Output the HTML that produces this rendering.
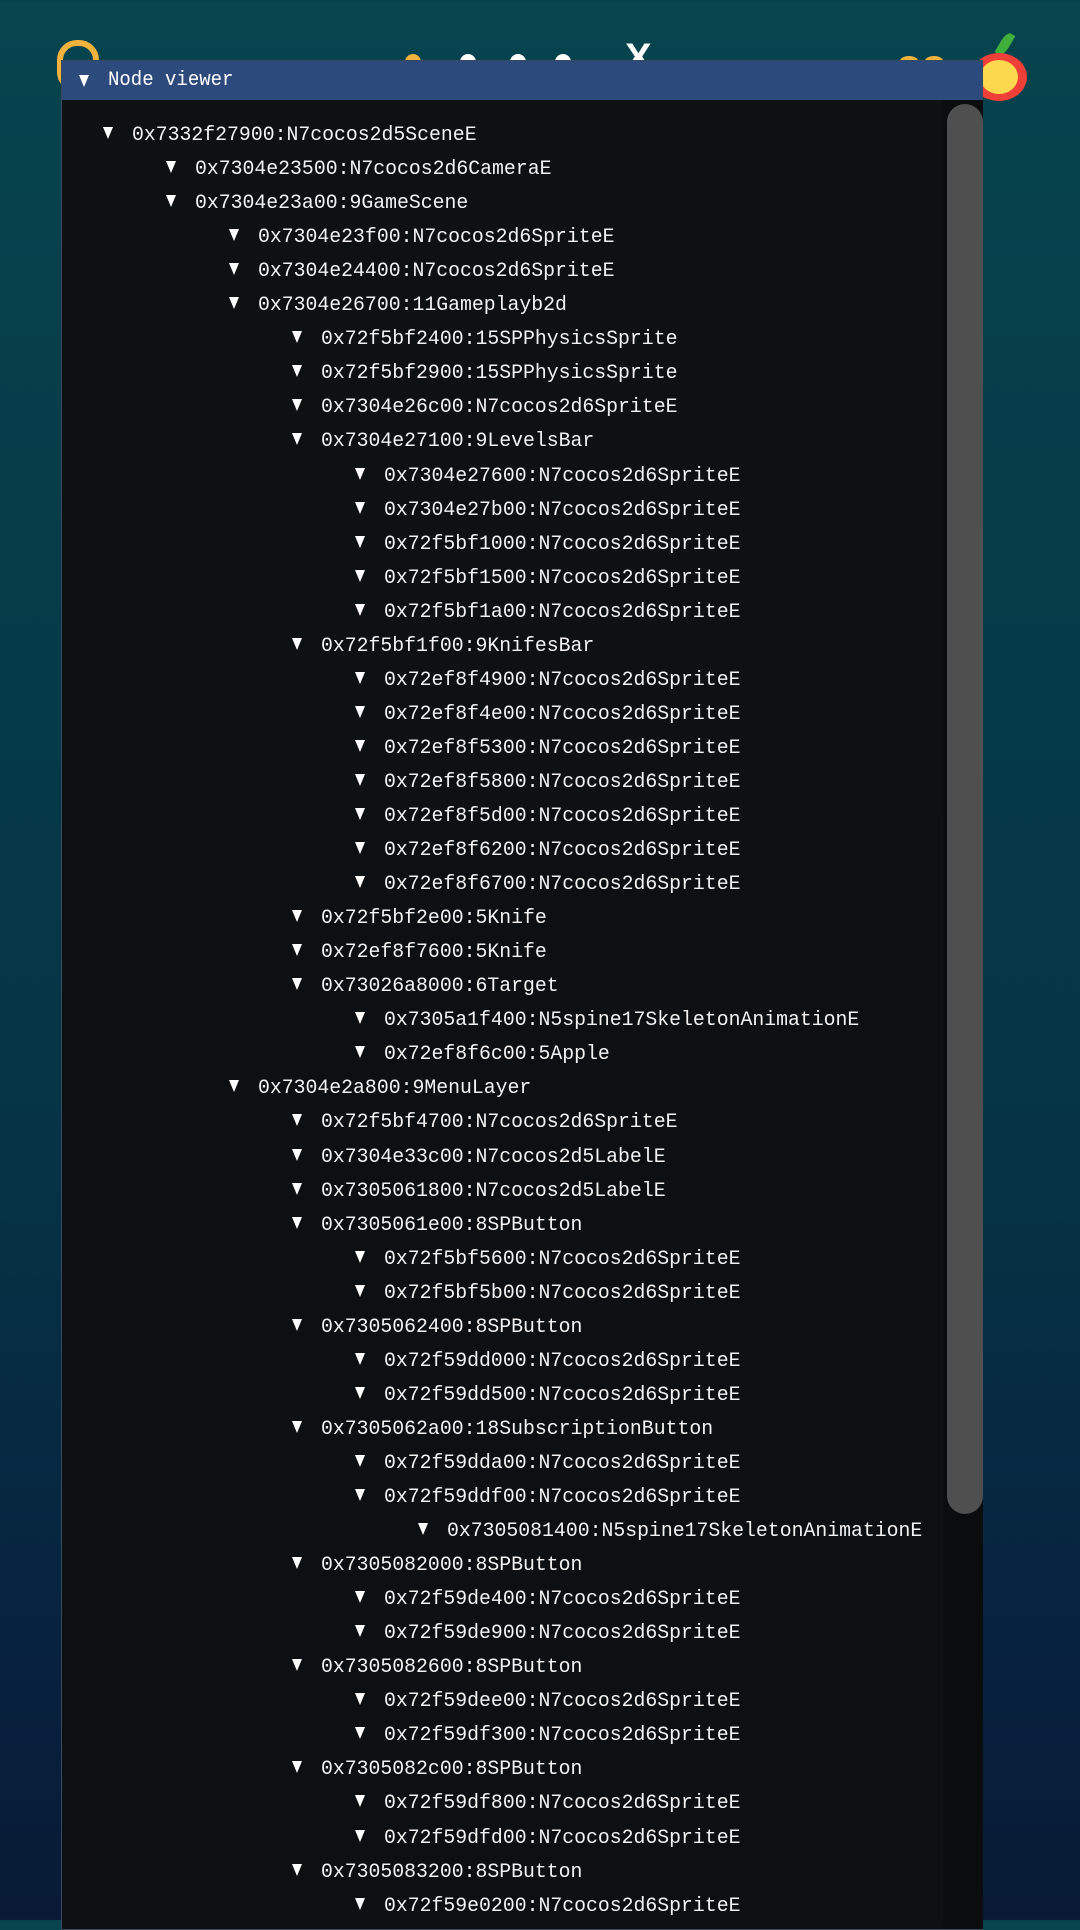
<!DOCTYPE html>
<html><head><meta charset="utf-8"><style>
html,body{margin:0;padding:0}
body{width:1080px;height:1920px;overflow:hidden;position:relative;
background:linear-gradient(180deg,#06444e 0%,#053c48 30%,#063446 60%,#07223f 85%,#081a36 100%);
font-family:"Liberation Mono",monospace}
.win{position:absolute;left:61px;top:60px;width:922px;height:1870px;border:1px solid #3a4a5e;box-sizing:border-box;background:rgba(13,16,17,0.97)}
.title{position:absolute;left:0;top:0;right:0;height:39px;background:#2c4a7c;color:#fff;font-size:20px}
.title span{position:absolute;left:46px;top:8px;transform:scaleX(0.95);transform-origin:left}
.tri{position:absolute;width:0;height:0;border-left:5px solid transparent;border-right:5px solid transparent;border-top:12px solid #fff}
.track{position:absolute;left:881px;top:39px;width:40px;bottom:0;background:#0a0c0d}
.thumb{position:absolute;left:885px;top:43px;width:36px;height:1410px;background:#4f4f4f;border-radius:18px}
.r{position:absolute;color:#f2f2f2;font-size:20px;line-height:24px;white-space:pre;transform:scaleX(0.99);transform-origin:left}
</style></head><body>
<div style="position:absolute;left:57px;top:40px;width:30px;height:40px;border:6px solid #f2b23e;border-radius:20px"></div>
<div style="position:absolute;left:405px;top:54px;width:16px;height:16px;border-radius:50%;background:#f2b23e"></div>
<div style="position:absolute;left:460px;top:54px;width:16px;height:16px;border-radius:50%;background:#fff"></div>
<div style="position:absolute;left:510px;top:54px;width:16px;height:16px;border-radius:50%;background:#fff"></div>
<div style="position:absolute;left:555px;top:54px;width:16px;height:16px;border-radius:50%;background:#fff"></div>
<div style="position:absolute;left:625px;top:43px;color:#fff;font:bold 40px 'Liberation Sans',sans-serif;line-height:30px">X</div>
<div style="position:absolute;left:900px;top:56px;width:18px;height:10px;border-radius:50%;background:#f2b23e"></div>
<div style="position:absolute;left:925px;top:56px;width:18px;height:10px;border-radius:50%;background:#f2b23e"></div>
<div style="position:absolute;left:1000px;top:32px;width:10px;height:24px;background:#3fae3a;border-radius:50% 0;transform:rotate(30deg)"></div>
<div style="position:absolute;left:971px;top:53px;width:56px;height:48px;border-radius:50%;background:#ee4038"></div>
<div style="position:absolute;left:980px;top:60px;width:38px;height:34px;border-radius:50%;background:#fcd84e"></div>
<div class="win">
<div class="title"><div class="tri" style="left:17px;top:14px"></div><span>Node viewer</span></div>
<div class="track"></div><div class="thumb"></div>
<div id="rows"></div>
</div>
<script>
var d=[[0,"0x7332f27900:N7cocos2d5SceneE"],[1,"0x7304e23500:N7cocos2d6CameraE"],[1,"0x7304e23a00:9GameScene"],[2,"0x7304e23f00:N7cocos2d6SpriteE"],[2,"0x7304e24400:N7cocos2d6SpriteE"],[2,"0x7304e26700:11Gameplayb2d"],[3,"0x72f5bf2400:15SPPhysicsSprite"],[3,"0x72f5bf2900:15SPPhysicsSprite"],[3,"0x7304e26c00:N7cocos2d6SpriteE"],[3,"0x7304e27100:9LevelsBar"],[4,"0x7304e27600:N7cocos2d6SpriteE"],[4,"0x7304e27b00:N7cocos2d6SpriteE"],[4,"0x72f5bf1000:N7cocos2d6SpriteE"],[4,"0x72f5bf1500:N7cocos2d6SpriteE"],[4,"0x72f5bf1a00:N7cocos2d6SpriteE"],[3,"0x72f5bf1f00:9KnifesBar"],[4,"0x72ef8f4900:N7cocos2d6SpriteE"],[4,"0x72ef8f4e00:N7cocos2d6SpriteE"],[4,"0x72ef8f5300:N7cocos2d6SpriteE"],[4,"0x72ef8f5800:N7cocos2d6SpriteE"],[4,"0x72ef8f5d00:N7cocos2d6SpriteE"],[4,"0x72ef8f6200:N7cocos2d6SpriteE"],[4,"0x72ef8f6700:N7cocos2d6SpriteE"],[3,"0x72f5bf2e00:5Knife"],[3,"0x72ef8f7600:5Knife"],[3,"0x73026a8000:6Target"],[4,"0x7305a1f400:N5spine17SkeletonAnimationE"],[4,"0x72ef8f6c00:5Apple"],[2,"0x7304e2a800:9MenuLayer"],[3,"0x72f5bf4700:N7cocos2d6SpriteE"],[3,"0x7304e33c00:N7cocos2d5LabelE"],[3,"0x7305061800:N7cocos2d5LabelE"],[3,"0x7305061e00:8SPButton"],[4,"0x72f5bf5600:N7cocos2d6SpriteE"],[4,"0x72f5bf5b00:N7cocos2d6SpriteE"],[3,"0x7305062400:8SPButton"],[4,"0x72f59dd000:N7cocos2d6SpriteE"],[4,"0x72f59dd500:N7cocos2d6SpriteE"],[3,"0x7305062a00:18SubscriptionButton"],[4,"0x72f59dda00:N7cocos2d6SpriteE"],[4,"0x72f59ddf00:N7cocos2d6SpriteE"],[5,"0x7305081400:N5spine17SkeletonAnimationE"],[3,"0x7305082000:8SPButton"],[4,"0x72f59de400:N7cocos2d6SpriteE"],[4,"0x72f59de900:N7cocos2d6SpriteE"],[3,"0x7305082600:8SPButton"],[4,"0x72f59dee00:N7cocos2d6SpriteE"],[4,"0x72f59df300:N7cocos2d6SpriteE"],[3,"0x7305082c00:8SPButton"],[4,"0x72f59df800:N7cocos2d6SpriteE"],[4,"0x72f59dfd00:N7cocos2d6SpriteE"],[3,"0x7305083200:8SPButton"],[4,"0x72f59e0200:N7cocos2d6SpriteE"]];
var h="";
for(var i=0;i<d.length;i++){var y=134+34.05*i-60,x=d[i][0]*63;
h+='<div class="tri" style="left:'+(41+x)+'px;top:'+(y-8)+'px"></div><div class="r" style="left:'+(70+x)+'px;top:'+(y-11)+'px">'+d[i][1]+'</div>';}
document.getElementById("rows").innerHTML=h;
</script>
</body></html>
